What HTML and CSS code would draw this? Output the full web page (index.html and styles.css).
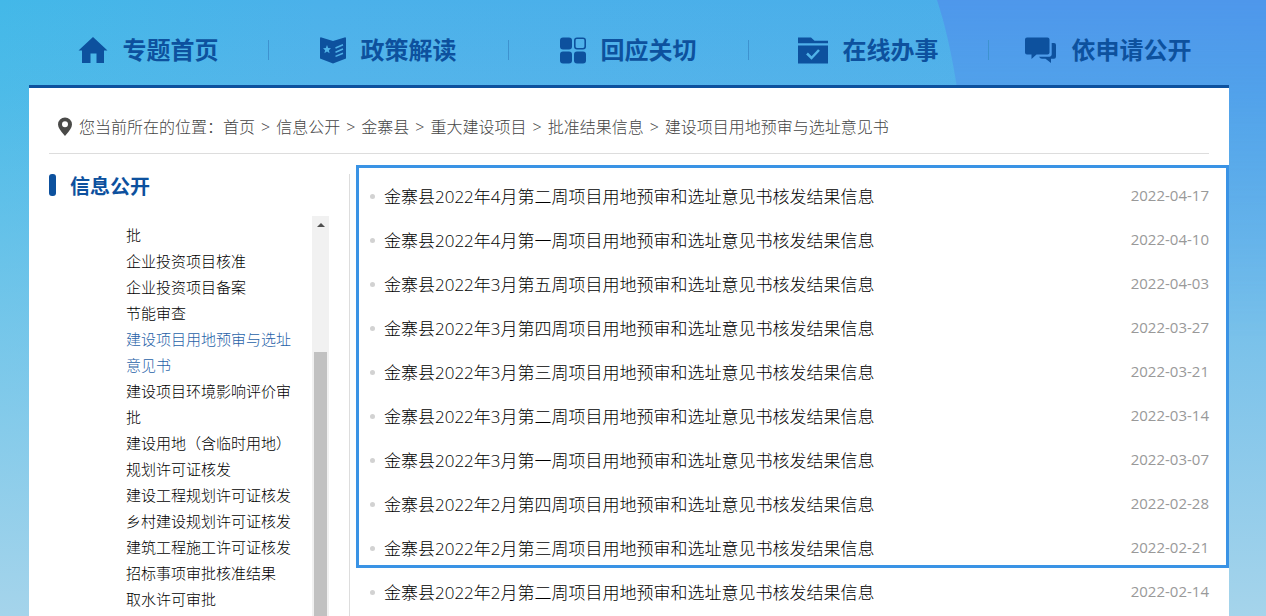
FILE: index.html
```html
<!DOCTYPE html>
<html lang="zh-CN">
	<head>
		<title>建设项目用地预审与选址意见书</title>
		<meta charset="utf-8">
		<link rel="stylesheet" href="styles.css">
	</head>

	<body>
		<svg class="bg_shape" viewBox="0 0 329 616" preserveAspectRatio="none" aria-hidden="true">
			<path d="M0 0 Q12 36 20 88 Q60 400 30 616 H329 V0Z"/>
		</svg>

		<div class="wrap">
			<!-- 导航 -->
			<ul class="nav">
				<li><a href="#">
					<svg width="30" height="27" viewBox="0 0 30 27"><path d="M15 0 L29.500 13.500 H26 V26 H18.500 V16.500 H12.500 V26 H4 V13.500 H0.500Z"/></svg>
					<span>专题首页</span>
				</a></li>
				<li><a href="#">
					<svg width="26" height="27" viewBox="0 0 26 27">
						<path d="M0 1.500 Q0 0 1.500 .4 L13 4 L24.500 .4 Q26 0 26 1.500 V21.500 L13 26.500 L0 21.500Z"/>
						<path class="light" d="M7 8 L8.200 11 L11 11.200 L8.900 13.200 L9.600 16.200 L7 14.600 L4.400 16.200 L5.100 13.200 L3 11.200 L5.800 11Z"/>
						<path class="line" d="M15.500 11 L23 7.800 M15.500 15.200 L23 12 M15.500 19.400 L23 16.200"/>
					</svg>
					<span>政策解读</span>
				</a></li>
				<li><a href="#">
					<svg width="26" height="27" viewBox="0 0 26 27">
						<rect x="0" y="0.500" width="12" height="12" rx="3"/>
						<rect x="0" y="14.500" width="12" height="12" rx="3"/>
						<rect x="14" y="14.500" width="12" height="12" rx="3"/>
						<rect class="box" x="14.800" y="1.300" width="10.400" height="10.400" rx="2.200"/>
					</svg>
					<span>回应关切</span>
				</a></li>
				<li><a href="#">
					<svg width="30" height="27" viewBox="0 0 30 27">
						<path d="M0 .5 H13 L16.500 3.800 H30 V6.200 H0Z M0 8.500 H30 V26.500 H0Z"/>
						<path class="check" d="M9 16.500 L13.500 21 L21 13"/>
					</svg>
					<span>在线办事</span>
				</a></li>
				<li><a href="#">
					<svg width="32" height="27" viewBox="0 0 32 27">
						<path d="M2 .5 H22.500 Q24.500 .5 24.500 2.500 V15.500 Q24.500 17.500 22.500 17.500 H11.500 L6.500 22 V17.500 H2 Q0 17.500 0 15.500 V2.500 Q0 .5 2 .5Z"/>
						<path d="M26.700 6 H29 Q31 6 31 8 V19.500 Q31 21.800 29 21.800 H26 V26 L20.500 21.800 H17 Q15 21.800 14 19.700 H24.500 Q26.700 19.500 26.700 17.500Z"/>
					</svg>
					<span>依申请公开</span>
				</a></li>
			</ul>

			<div class="container">
				<!-- 当前位置 -->
				<div class="position">
					<svg width="16" height="20" viewBox="0 0 16 20"><path fill-rule="evenodd" d="M8 0.500 A7 7 0 0 1 15 7.500 Q15 11.500 8 19 Q1 11.500 1 7.500 A7 7 0 0 1 8 .5Z M8 4.300 A3 3 0 1 0 8 10.300 A3 3 0 1 0 8 4.300Z"/></svg>
					<span>您当前所在的位置：</span>
					<a href="#">首页</a><i>&gt;</i>
					<a href="#">信息公开</a><i>&gt;</i>
					<a href="#">金寨县</a><i>&gt;</i>
					<a href="#">重大建设项目</a><i>&gt;</i>
					<a href="#">批准结果信息</a><i>&gt;</i>
					<a href="#">建设项目用地预审与选址意见书</a>
				</div>

				<div class="main">
					<div class="side">
						<h2>信息公开</h2>
						<div class="tree">
							<ul>
								<li><a href="#">批</a></li>
								<li><a href="#">企业投资项目核准</a></li>
								<li><a href="#">企业投资项目备案</a></li>
								<li><a href="#">节能审查</a></li>
								<li><a class="on" href="#">建设项目用地预审与选址意见书</a></li>
								<li><a href="#">建设项目环境影响评价审批</a></li>
								<li><a href="#">建设用地（含临时用地）规划许可证核发</a></li>
								<li><a href="#">建设工程规划许可证核发</a></li>
								<li><a href="#">乡村建设规划许可证核发</a></li>
								<li><a href="#">建筑工程施工许可证核发</a></li>
								<li><a href="#">招标事项审批核准结果</a></li>
								<li><a href="#">取水许可审批</a></li>
							</ul>
							<div class="scroll">
								<div class="up"></div>
								<div class="thumb"></div>
							</div>
						</div>
					</div>

					<div class="news">
						<ul>
							<li><a href="#">金寨县2022年4月第二周项目用地预审和选址意见书核发结果信息</a><span>2022-04-17</span></li>
							<li><a href="#">金寨县2022年4月第一周项目用地预审和选址意见书核发结果信息</a><span>2022-04-10</span></li>
							<li><a href="#">金寨县2022年3月第五周项目用地预审和选址意见书核发结果信息</a><span>2022-04-03</span></li>
							<li><a href="#">金寨县2022年3月第四周项目用地预审和选址意见书核发结果信息</a><span>2022-03-27</span></li>
							<li><a href="#">金寨县2022年3月第三周项目用地预审和选址意见书核发结果信息</a><span>2022-03-21</span></li>
							<li><a href="#">金寨县2022年3月第二周项目用地预审和选址意见书核发结果信息</a><span>2022-03-14</span></li>
							<li><a href="#">金寨县2022年3月第一周项目用地预审和选址意见书核发结果信息</a><span>2022-03-07</span></li>
							<li><a href="#">金寨县2022年2月第四周项目用地预审和选址意见书核发结果信息</a><span>2022-02-28</span></li>
							<li><a href="#">金寨县2022年2月第三周项目用地预审和选址意见书核发结果信息</a><span>2022-02-21</span></li>
							<li><a href="#">金寨县2022年2月第二周项目用地预审和选址意见书核发结果信息</a><span>2022-02-14</span></li>
						</ul>
						<div class="frame"></div>
					</div>
				</div>
			</div>
		</div>
	</body>
</html>
```

FILE: styles.css
```css
* {
	box-sizing: border-box;
}
body, ul, li, h2 {
	margin: 0;
	padding: 0;
}
li {
	list-style: none;
}
a {
	color: inherit;
	text-decoration: none;
}

body {
	position: relative;
	min-height: 100vh;
	padding: 0 37px 0 29px;
	display: flex;
	font-family: "Open Sans", "Noto Sans CJK SC", sans-serif;
	font-weight: 300;
	background: linear-gradient(to bottom, rgba(165, 212, 235, 0) 0, rgba(165, 212, 235, 0.1) 15%, #a5d4eb 100%), linear-gradient(to right, #43b8e8 0, #4bb1ea 25%, #4aade9 100%);
}
.bg_shape {
	position: absolute;
	top: 0;
	right: 0;
	width: 26%;
	height: 100%;
	fill: #5090ec;
	opacity: 0.75;
	-webkit-mask-image: linear-gradient(#000, rgba(0, 0, 0, 0.5) 20%, transparent 55%);
	mask-image: linear-gradient(#000, rgba(0, 0, 0, 0.5) 20%, transparent 55%);
}
.wrap {
	position: relative;
	width: 100%;
	max-width: 1200px;
	margin: 0 auto;
	display: flex;
	flex-direction: column;
}

/* 导航 */
.nav {
	display: flex;
	padding-top: 15px;
	height: 85px;
}
.nav li {
	flex: 1;
	display: flex;
	align-items: center;
	justify-content: center;
	padding-right: 2px;
	background: linear-gradient(#3d92cf, #3d92cf) right center / 1px 20px no-repeat;
}
.nav li:last-child {
	background: none;
}
.nav a {
	display: flex;
	align-items: center;
	gap: 15px;
	font-size: 24px;
	line-height: 36px;
	font-weight: bold;
	color: #0d519e;
}
.nav svg {
	fill: #0d519e;
}
.nav .light {
	fill: #50b2e8;
}
.nav .line, .nav .check {
	fill: none;
	stroke: #50b2e8;
	stroke-width: 1.5;
}
.nav .check {
	stroke-width: 2.5;
}
.nav .box {
	fill: none;
	stroke: #0d519e;
	stroke-width: 1.6;
}

.container {
	flex: 1;
	display: flex;
	flex-direction: column;
	padding: 0 20px;
	border-top: 3px solid #0d519e;
	background: #fff;
}
.position {
	display: flex;
	align-items: center;
	height: 66px;
	padding: 12px 8px 0;
	border-bottom: 1px solid #ddd;
	font-size: 16px;
	line-height: 24px;
	color: #444;
}
.position svg {
	margin-right: 6px;
	fill: #4a4a48;
}
.position i {
	margin: 0 6px;
	font-style: normal;
}

.main {
	flex: 1;
	display: flex;
	padding-top: 20px;
}

/* 左侧栏目 */
.side {
	width: 301px;
	padding-right: 20px;
	border-right: 1px solid #ddd;
	display: flex;
	flex-direction: column;
}
.side h2 {
	display: flex;
	align-items: center;
	gap: 14px;
	height: 22px;
	margin-bottom: 20px;
	font-size: 20px;
	color: #0d519e;
}
.side h2::before {
	content: "";
	width: 7px;
	height: 22px;
	border-radius: 3px;
	background: #0d519e;
}
.tree {
	flex: 1;
	display: flex;
	justify-content: space-between;
	padding-left: 77px;
}
.tree ul {
	width: 170px;
	padding-top: 6px;
}
.tree li {
	font-size: 15px;
	line-height: 26px;
	color: #000;
}
.tree .on {
	color: #1f62a8;
}
.scroll {
	display: flex;
	flex-direction: column;
	width: 17px;
	padding: 0 2px;
	background: #f1f1f1;
}
.scroll .up {
	height: 136px;
}
.scroll .up::before {
	content: "";
	display: block;
	width: 0;
	margin: 7px auto 0;
	border: 4px solid transparent;
	border-top: 0;
	border-bottom-color: #505050;
}
.scroll .thumb {
	flex: 1;
	background: #c1c1c1;
}

/* 信息列表 */
.news {
	position: relative;
	flex: 1;
	padding-left: 20px;
}
.news li {
	display: flex;
	align-items: center;
	height: 44px;
}
.news li::before {
	content: "";
	width: 5px;
	height: 5px;
	margin-right: 9px;
	border-radius: 50%;
	background: #d2d2d2;
}
.news a {
	flex: 1;
	padding-bottom: 2px;
	font-size: 17px;
	color: #000;
}
.news span {
	padding-bottom: 2px;
	font-size: 15px;
	font-weight: 400;
	color: #999;
}
.news .frame {
	position: absolute;
	top: -9px;
	left: 6px;
	right: -20px;
	height: 403px;
	border: 3px solid #3a93e5;
	pointer-events: none;
}
```
